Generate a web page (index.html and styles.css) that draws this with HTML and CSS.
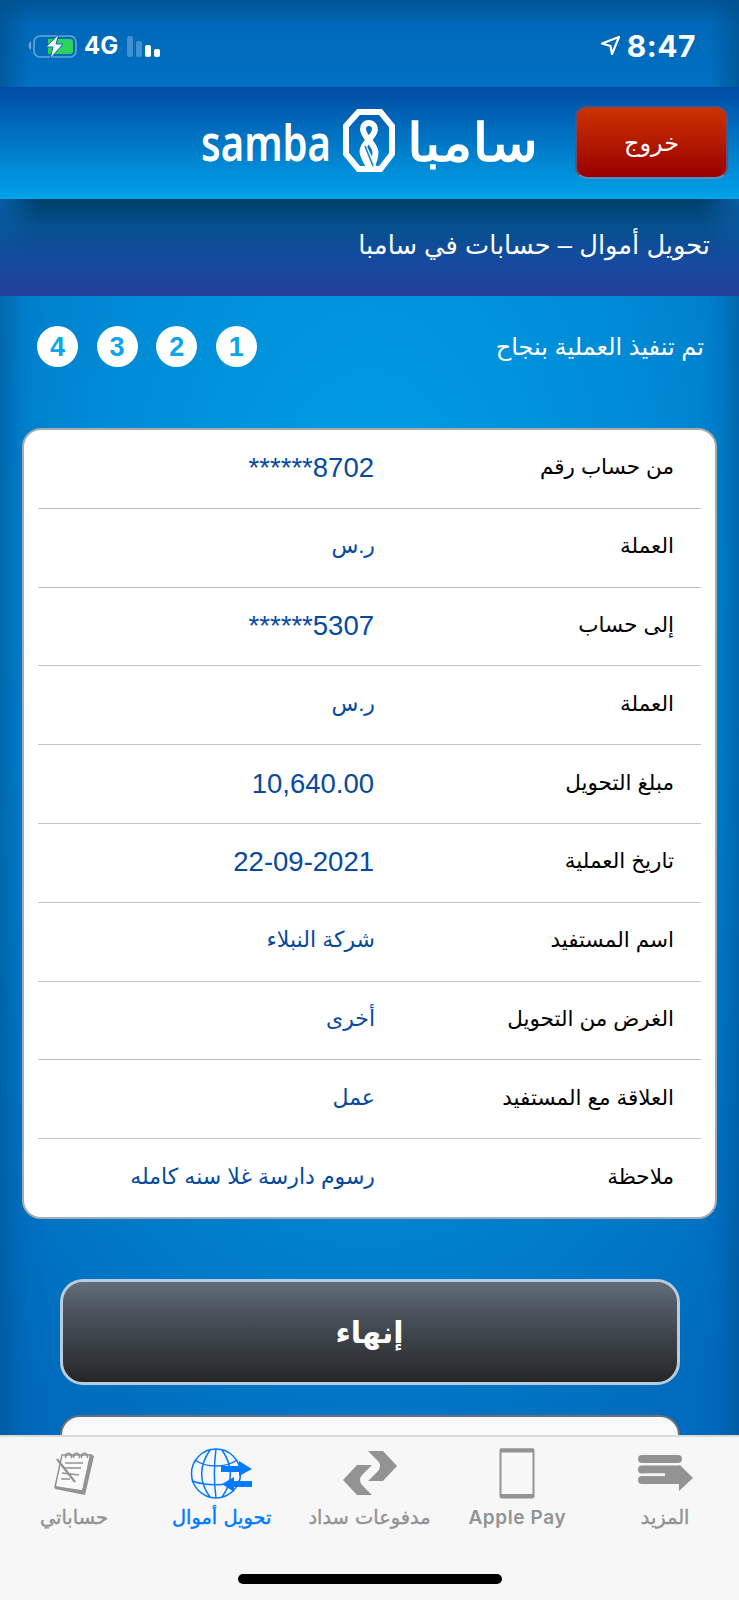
FILE: index.html
```
<!DOCTYPE html>
<html lang="ar" dir="rtl">
<head>
    <meta charset="UTF-8">
    <meta name="viewport" content="width=device-width, initial-scale=1.0">
    <title>سامبا</title>
    <link rel="stylesheet" href="styles.css">
</head>
<body>
<div class="screen">

    <!-- Phone status bar -->
    <div class="status-bar" dir="ltr">
        <div class="status-left">
            <svg width="50" height="26" viewBox="0 0 50 26">
                <path d="M3 8 C0 10 0 15 3 17 Z" fill="#6fa9de"/>
                <rect x="6" y="3" width="42" height="21" rx="6" fill="none" stroke="#69a5dc" stroke-width="1.6"/>
                <path d="M20 6 H42 Q45 6 45 9 V18 Q45 21 42 21 H20 Z" fill="#30d158"/>
                <path d="M31 1 L18 14 H25 L22 26 L35 11 H28 Z" fill="#fff" stroke="#006bbd" stroke-width="1"/>
            </svg>
            <span class="network">4G</span>
            <div class="signal"><i class="bar b1"></i><i class="bar b2"></i><i class="bar b3"></i><i class="bar b4"></i></div>
        </div>
        <div class="status-right">
            <svg width="20" height="21" viewBox="0 0 20 21">
                <path d="M18 2 L1 8.5 L9.500 11 L11 19 Z" fill="none" stroke="#fff" stroke-width="2.2" stroke-linejoin="round"/>
            </svg>
            <span class="clock">8:47</span>
        </div>
    </div>

    <!-- Header -->
    <div class="header">
        <button class="logout">خروج</button>
        <svg class="logo" width="338" height="72" viewBox="0 0 338 72" direction="ltr">
            <text x="1" y="57" class="logo-en" textLength="130" lengthAdjust="spacingAndGlyphs">samba</text>
            <path d="M158.500 8 H180.500 L192 22 V50 L180.500 65 H158.500 L146 50 V22 Z" fill="none" stroke="#fff" stroke-width="6"/>
            <path d="M175 25 C175 33 162.500 39 162.500 47 C162.500 54 168 59 171 66" fill="none" stroke="#fff" stroke-width="6"/>
            <path d="M175 25 C174.500 17 163 17 163 25 C163 33 175 40 175.500 48 C175.500 54 174 57 171 63" fill="none" stroke="#fff" stroke-width="6"/>
            <path d="M164 43 L174 64" stroke="#fff" stroke-width="6"/>
            <path d="M165 42 L173 62" stroke="#0084d2" stroke-width="1.500"/>
            <text x="207" y="57" class="logo-ar" textLength="131" lengthAdjust="spacingAndGlyphs">سامبا</text>
        </svg>
    </div>

    <div class="page-title"><span>تحويل أموال – حسابات في سامبا</span></div>

    <!-- Steps -->
    <div class="steps-row">
        <div class="message">تم تنفيذ العملية بنجاح</div>
        <div class="steps">
            <span class="step">1</span>
            <span class="step">2</span>
            <span class="step">3</span>
            <span class="step">4</span>
        </div>
    </div>

    <!-- Transfer details -->
    <div class="details">
        <div class="row"><span class="label">من حساب رقم</span><span class="value num" dir="ltr">******8702</span></div>
        <div class="row"><span class="label">العملة</span><span class="value">ر.س</span></div>
        <div class="row"><span class="label">إلى حساب</span><span class="value num" dir="ltr">******5307</span></div>
        <div class="row"><span class="label">العملة</span><span class="value">ر.س</span></div>
        <div class="row"><span class="label">مبلغ التحويل</span><span class="value num" dir="ltr">10,640.00</span></div>
        <div class="row"><span class="label">تاريخ العملية</span><span class="value num" dir="ltr">22-09-2021</span></div>
        <div class="row"><span class="label">اسم المستفيد</span><span class="value">شركة النبلاء</span></div>
        <div class="row"><span class="label">الغرض من التحويل</span><span class="value">أخرى</span></div>
        <div class="row"><span class="label">العلاقة مع المستفيد</span><span class="value">عمل</span></div>
        <div class="row"><span class="label">ملاحظة</span><span class="value">رسوم دارسة غلا سنه كامله</span></div>
    </div>

    <button class="finish">إنهاء</button>
    <div class="next-box"></div>

    <!-- Bottom tabs -->
    <div class="tab-bar">
        <div class="tabs">
            <div class="tab">
                <svg width="58" height="52" viewBox="0 0 58 52">
                    <path d="M6 11 H42 M6 21.500 H42 M6 32 H42" stroke="#939393" stroke-width="8" stroke-linecap="round"/>
                    <path d="M29 25 L44 17 L57 30 L43 43 V36 H29 Z" fill="#939393"/>
                    <path d="M8 26.800 H29" stroke="#f7f7f7" stroke-width="2.500"/>
                </svg>
                <span>المزيد</span>
            </div>
            <div class="tab">
                <svg width="36" height="52" viewBox="0 0 36 52">
                    <rect x="1.500" y="1.500" width="33" height="48" rx="1" fill="none" stroke="#939393" stroke-width="2"/>
                    <path d="M1 2.500 H35 M1 48 H35" stroke="#939393" stroke-width="4"/>
                </svg>
                <span class="latin">Apple Pay</span>
            </div>
            <div class="tab">
                <svg width="56" height="52" viewBox="0 0 56 52">
                    <path d="M26 3 H41 L55 18 L41 33 H26 L36 23 Q40 18 36 13 Z" fill="#939393"/>
                    <path d="M30 17 H15 L1 32 L15 47 H30 L20 37 Q16 32 20 27 Z" fill="#939393"/>
                </svg>
                <span>مدفوعات سداد</span>
            </div>
            <div class="tab active">
                <svg width="64" height="52" viewBox="0 0 64 52">
                    <g fill="none" stroke="#007aff" stroke-width="1.500">
                        <circle cx="26" cy="25.500" r="24.500"/>
                        <path d="M26 1 C24 16 24 35 26 50 M20 2 C9 18 9 34 20 49 M32 2 C43 18 43 34 32 49 M5 12 C16 20 36 20 47 12 M2 33 C16 38 36 38 50 33"/>
                    </g>
                    <path d="M31 18 H49 V13 L62 21 L49 28 V24 H31 Z M62 33 H44 V29 L32 36 L44 44 V39 H62 Z" fill="#007aff"/>
                </svg>
                <span>تحويل أموال</span>
            </div>
            <div class="tab">
                <svg width="44" height="52" viewBox="0 0 44 52">
                    <path d="M10 7 L39 7 L31 43 L3 39 Z" fill="#f9f9f9" stroke="#939393" stroke-width="1.500"/>
                    <path d="M38 6 L42 8 L33 47 L3 41 L3 38 L30 43 Z" fill="#939393"/>
                    <g fill="none" stroke="#939393" stroke-width="1.500">
                        <path d="M14 10 A3 3 0 1 1 19 10 M22 10 A3 3 0 1 1 27 10 M30 10 A3 3 0 1 1 35 10"/>
                        <path d="M13 15 H31 M11 20 H29 M10 25 L27 27 M9 31 H18"/>
                    </g>
                    <path d="M5 11 L23 34" stroke="#939393" stroke-width="2.200"/>
                </svg>
                <span>حساباتي</span>
            </div>
        </div>
        <div class="home-indicator"></div>
    </div>

</div>
</body>
</html>
```
FILE: styles.css
```
* {
    box-sizing: border-box;
}

body {
    margin: 0;
    font-family: "Liberation Sans", "DejaVu Sans", sans-serif;
}

button {
    font-family: inherit;
}

.screen {
    width: 739px;
    height: 1600px;
    display: flex;
    flex-direction: column;
    overflow: hidden;
    background: radial-gradient(ellipse 560px 1000px at 50% 36%, #009fe6 0%, #008bd6 50%, #006abc 100%);
    box-shadow: inset 0 0 36px #004f8c;
}

/* Status bar */
.status-bar {
    height: 87px;
    padding: 4px 43px 0 28px;
    display: flex;
    align-items: center;
    justify-content: space-between;
    color: #fff;
    background:
        linear-gradient(to right, rgba(0, 80, 140, 0.7), rgba(0, 80, 140, 0) 4%, rgba(0, 80, 140, 0) 96%, rgba(0, 80, 140, 0.7)),
        linear-gradient(to bottom, #005494, #0068b8 28%, #0071c3);
}

.status-left,
.status-right {
    display: flex;
    align-items: center;
}

.network {
    font-family: Inter, sans-serif;
    font-size: 24px;
    font-weight: 700;
    margin-left: 6px;
}

.signal {
    display: flex;
    align-items: flex-end;
    gap: 3px;
    height: 22px;
    margin: 0 0 0 9px;
}

.bar {
    width: 6px;
    border-radius: 2px;
    background: #fff;
}

.b1 {
    height: 21px;
    opacity: 0.25;
}

.b2 {
    height: 16px;
    opacity: 0.25;
}

.b3 {
    height: 12px;
}

.b4 {
    height: 8px;
}

.clock {
    font-family: Inter, sans-serif;
    font-size: 30px;
    font-weight: 700;
    letter-spacing: 0.5px;
    margin-left: 6px;
}

/* Header */
.header {
    height: 112px;
    padding: 17px 11px 0 0;
    display: flex;
    gap: 38px;
    background: linear-gradient(to bottom, #004ca3, #00a3e9);
}

.logo {
    flex: none;
}

.logo-en {
    font-family: "Noto Sans", sans-serif;
    font-size: 51px;
    font-weight: 600;
    fill: #fff;
}

.logo-ar {
    font-family: "DejaVu Sans", sans-serif;
    font-size: 52px;
    fill: #fff;
    stroke: #fff;
    stroke-width: 1.3;
}

.logout {
    width: 153px;
    height: 73px;
    margin: 2px 0 0 -1px;
    flex: none;
    border: 2px solid #6c4c66;
    border-bottom-color: #5c8cbc;
    border-radius: 12px;
    background: linear-gradient(to bottom, #cc3300, #990000);
    color: #fff;
    font-size: 24px;
}

.page-title {
    height: 97px;
    padding: 31px 29px 0;
    color: #fff;
    font-size: 25.7px;
    background:
        radial-gradient(ellipse 40px 60px at 0 0, #0a5ca4, rgba(10, 92, 164, 0)),
        radial-gradient(ellipse 40px 60px at 100% 0, #0a5ca4, rgba(10, 92, 164, 0)),
        linear-gradient(to bottom, #003f69, #04508c 28%, #164aa0 65%, #233e98);
}

/* Steps */
.steps-row {
    height: 132px;
    padding: 30px 35px 0 37px;
    display: flex;
    justify-content: space-between;
}

.message {
    color: #fff;
    font-size: 24px;
    line-height: 41px;
}

.steps {
    display: flex;
    gap: 18.600px;
}

.step {
    width: 41px;
    height: 41px;
    border-radius: 50%;
    background: #fff;
    color: #0aa5ea;
    font-size: 27px;
    font-weight: bold;
    line-height: 43px;
    text-align: center;
}

/* Details card */
.details {
    height: 791px;
    margin: 0 22px;
    padding: 0 14px;
    flex: none;
    display: flex;
    flex-direction: column;
    background: #fff;
    border: 2px solid #a5abb3;
    border-radius: 19px;
}

.row {
    flex: 1;
    display: flex;
    align-items: center;
    padding: 0 27px 3px 0;
    border-bottom: 1px solid #c4c4c4;
    white-space: nowrap;
}

.row:last-child {
    border-bottom: none;
}

.label {
    width: 299px;
    font-size: 21.5px;
    color: #000;
}

.value {
    font-size: 22px;
    color: #064a9e;
}

.num {
    font-size: 27.5px;
    padding: 2px 1px 0 0;
}

/* Buttons */
.finish {
    width: 620px;
    height: 106px;
    margin: 60px auto 0;
    flex: none;
    border: 3px solid #b9cbdc;
    border-radius: 23px;
    background: linear-gradient(to bottom, #626d77, #454d57 40%, #262626);
    color: #fff;
    font-size: 30px;
    font-weight: bold;
}

.next-box {
    width: 620px;
    height: 20px;
    margin: 30px auto 0;
    flex: none;
    border: 2px solid #66717d;
    border-bottom: none;
    border-radius: 20px 20px 0 0;
    background: #f9f9f9;
}

/* Tab bar */
.tab-bar {
    flex: 1;
    background: #f7f7f7;
    border-top: 2px solid #dadada;
}

.tabs {
    display: flex;
    height: 137px;
    padding-top: 11px;
}

.tab {
    flex: 1;
    display: flex;
    flex-direction: column;
    align-items: center;
    color: #939393;
    font-family: "DejaVu Sans", sans-serif;
    font-size: 19.4px;
    white-space: nowrap;
}

.tab span {
    margin-top: 6px;
    -webkit-text-stroke: 0.4px currentColor;
}

.active {
    color: #007aff;
}

.tab .latin {
    font-family: Inter, sans-serif;
    font-size: 19px;
    font-weight: 600;
    letter-spacing: 0.6px;
    -webkit-text-stroke: 0;
}

.home-indicator {
    width: 264px;
    height: 10px;
    margin: 0 auto;
    border-radius: 5px;
    background: #000;
}
```
